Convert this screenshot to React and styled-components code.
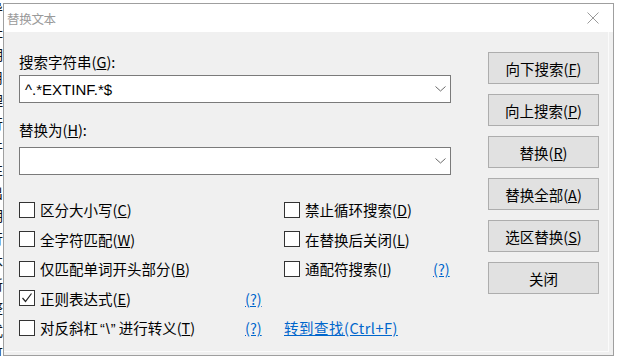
import styled, { createGlobalStyle } from "styled-components"

const GlobalStyle = createGlobalStyle`
  html, body {
    margin: 0;
    padding: 0;
    background: #ffffff;
  }
  body {
    width: 618px;
    height: 360px;
    overflow: hidden;
    font-family: "Noto Sans CJK SC", "Noto Sans", sans-serif;
  }
`

const Page = styled.div`
  width: 618px;
  height: 360px;
  overflow: hidden;
  background: #ffffff;
  display: grid;
  grid-template-columns: 3px 611px 4px;
  grid-template-rows: 3px 353px 4px;
`

/* slivers of the document that lies behind the dialog */
const Strip = styled.div`
  grid-column: ${(p) => p.$col || "auto"};
  overflow: hidden;
  display: flex;
  flex-direction: ${(p) => (p.$vertical ? "column" : "row")};
  align-items: ${(p) => p.$align || "flex-start"};
  padding-left: ${(p) => p.$pad || 0}px;
  font-size: 14px;
  line-height: 23px;
  color: #111;
  white-space: nowrap;
`

const SideText = styled.div`
  margin-left: -11px;
  margin-top: ${(p) => p.$top || 0}px;
`

const Window = styled.div`
  box-sizing: border-box;
  border: 1px solid #9f9f9f;
  background: #f0f0f0;
  display: flex;
  flex-direction: column;
  box-shadow: inset -4px -3px 0 #f0f0f0, inset -5px -4px 0 #fbfbfb;
`

const TitleBar = styled.div`
  height: 28px;
  flex-shrink: 0;
  background: #ffffff;
  display: flex;
  align-items: center;
  justify-content: space-between;
  padding: 0 14px 0 3px;
`

const Title = styled.span`
  font-size: 12.5px;
  color: #9a9a9a;
  letter-spacing: -0.3px;
`

const Body = styled.div`
  flex: 1;
  display: grid;
  grid-template-columns: 432px 111px;
  column-gap: 37px;
  align-items: start;
  padding: 20px 0 0 15px;
`

const Fields = styled.div`
  display: flex;
  flex-direction: column;
`

const Label = styled.div`
  font-size: 14.5px;
  line-height: 20px;
  color: #000;
  margin-top: ${(p) => p.$gap || 0}px;
`

const Combo = styled.div`
  height: 28px;
  box-sizing: border-box;
  margin-top: ${(p) => p.$gap || 0}px;
  border: 1px solid #7a7a7a;
  background: #ffffff;
  display: flex;
  align-items: center;
  justify-content: space-between;
  padding: 0 4px 0 5px;
  font-family: "Liberation Sans", Arial, sans-serif;
  font-size: 15px;
  color: #000;
`

const Options = styled.div`
  margin-top: 20px;
  display: grid;
  grid-template-columns: 226px 39px 149px auto;
  grid-auto-rows: 29.5px;
  align-items: center;
`

const CheckRow = styled.div`
  display: flex;
  align-items: center;
  gap: 5px;
  font-size: 14.5px;
  color: #000;
  white-space: nowrap;
`

const Box = styled.span`
  width: 16px;
  height: 16px;
  box-sizing: border-box;
  border: 1px solid #333333;
  background: #ffffff;
  display: flex;
  align-items: center;
  justify-content: center;
  flex-shrink: 0;
`

const Quote = styled.span`
  font-family: "Liberation Sans", Arial, sans-serif;
  padding: 0 2px;
  letter-spacing: 1px;
`

const Link = styled.span`
  font-size: 14.5px;
  color: #0066cc;
  text-decoration: underline;
  white-space: nowrap;
  letter-spacing: ${(p) => p.$spread || 0}px;
`

const Buttons = styled.div`
  display: flex;
  flex-direction: column;
  gap: 10px;
`

const Button = styled.div`
  height: 32px;
  box-sizing: border-box;
  border: 1px solid #adadad;
  background: #e1e1e1;
  display: flex;
  align-items: center;
  justify-content: center;
  font-size: 14.5px;
  color: #000;
`

const Chevron = () => (
  <svg width="11" height="6" viewBox="0 0 11 6">
    <polyline points="0.5,0.5 5.5,5 10.5,0.5" fill="none" stroke="#6a6a6a" strokeWidth="1" />
  </svg>
)

const CloseIcon = () => (
  <svg width="12" height="12" viewBox="0 0 12 12">
    <path d="M0.5 0.5 L11.5 11.5 M11.5 0.5 L0.5 11.5" stroke="#9a9a9a" strokeWidth="1" />
  </svg>
)

function Check({ checked, children }) {
  return (
    <CheckRow>
      <Box>
        {checked && (
          <svg width="12" height="12" viewBox="0 0 12 12">
            <polyline points="1.5,6 4.5,9.5 10.5,1.5" fill="none" stroke="#222" strokeWidth="1.2" />
          </svg>
        )}
      </Box>
      <span>{children}</span>
    </CheckRow>
  )
}

const sideChars = ["导", "址", "明", "用", "理", "行", "件", "性", "出", "明", "行", "本", "新", "整", "式", "可"]

export default function App() {
  return (
    <Page>
      <GlobalStyle />
      <Strip $col="1 / 4" $align="flex-end" $pad={0}>
        <div style={{ marginBottom: -18 }}>导入频道列表并设置分组的播放地址按照规则替换</div>
      </Strip>
      <Strip $vertical>
        {sideChars.map((c, i) => (
          <SideText key={i} $top={i === 0 ? -6 : 0}>
            {c}
          </SideText>
        ))}
      </Strip>
      <Window>
        <TitleBar>
          <Title>替换文本</Title>
          <CloseIcon />
        </TitleBar>
        <Body>
          <Fields>
            <Label>
              搜索字符串(<u>G</u>):
            </Label>
            <Combo $gap={3}>
              <span>^.*EXTINF.*$</span>
              <Chevron />
            </Combo>
            <Label $gap={17}>
              替换为(<u>H</u>):
            </Label>
            <Combo $gap={7}>
              <span />
              <Chevron />
            </Combo>
            <Options>
              <Check>区分大小写(<u>C</u>)</Check>
              <span />
              <Check>禁止循环搜索(<u>D</u>)</Check>
              <span />

              <Check>全字符匹配(<u>W</u>)</Check>
              <span />
              <Check>在替换后关闭(<u>L</u>)</Check>
              <span />

              <Check>仅匹配单词开头部分(<u>B</u>)</Check>
              <span />
              <Check>通配符搜索(<u>I</u>)</Check>
              <Link>(?)</Link>

              <Check checked>正则表达式(<u>E</u>)</Check>
              <Link>(?)</Link>
              <span />
              <span />

              <Check>
                对反斜杠<Quote>“\”</Quote>进行转义(<u>T</u>)
              </Check>
              <Link>(?)</Link>
              <Link $spread={0.5}>转到查找(Ctrl+F)</Link>
              <span />
            </Options>
          </Fields>
          <Buttons>
            <Button>向下搜索(<u>F</u>)</Button>
            <Button>向上搜索(<u>P</u>)</Button>
            <Button>替换(<u>R</u>)</Button>
            <Button>替换全部(<u>A</u>)</Button>
            <Button>选区替换(<u>S</u>)</Button>
            <Button>关闭</Button>
          </Buttons>
        </Body>
      </Window>
      <span />
      <Strip $col="1 / 4" $pad={15}>
        <div style={{ marginTop: -2 }}>卜川卜</div>
      </Strip>
    </Page>
  )
}
